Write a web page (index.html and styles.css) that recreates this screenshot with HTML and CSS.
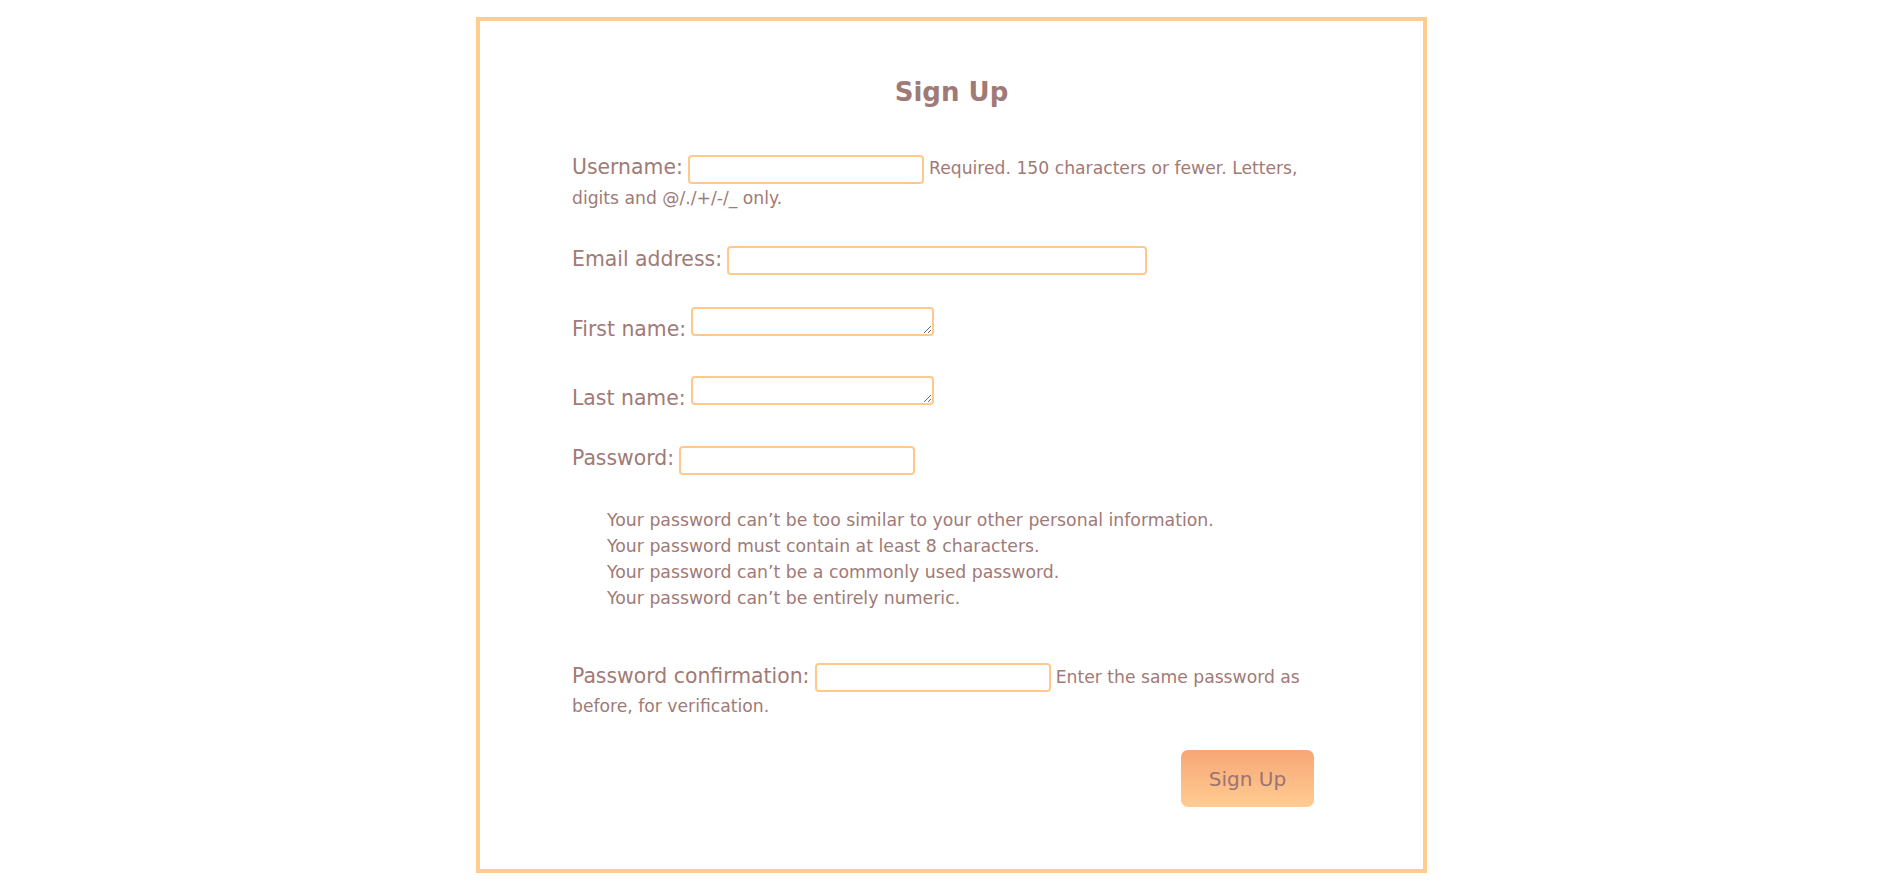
FILE: index.html
```html
<!DOCTYPE html>
<html lang="en">
<head>
<meta charset="utf-8">
<title>Sign Up</title>
<link rel="stylesheet" href="styles.css">
</head>
<body>
<div class="card">
  <h2 class="title">Sign Up</h2>
  <form class="form">
    <div class="field field-user">
      <label class="label" for="u">Username:</label>
      <input class="box box-short" id="u" type="text">
      <span class="help">Required. 150 characters or fewer. Letters, digits and @/./+/-/_ only.</span>
    </div>
    <div class="field field-email">
      <label class="label" for="e">Email address:</label>
      <input class="box box-email" id="e" type="email">
    </div>
    <div class="field field-first">
      <label class="label" for="f">First name:</label>
      <textarea class="box area" id="f" rows="1"></textarea>
    </div>
    <div class="field field-last">
      <label class="label" for="l">Last name:</label>
      <textarea class="box area" id="l" rows="1"></textarea>
    </div>
    <div class="field field-pass">
      <label class="label" for="p">Password:</label>
      <input class="box box-short" id="p" type="password">
    </div>
    <ul class="rules">
      <li>Your password can’t be too similar to your other personal information.</li>
      <li>Your password must contain at least 8 characters.</li>
      <li>Your password can’t be a commonly used password.</li>
      <li>Your password can’t be entirely numeric.</li>
    </ul>
    <div class="field field-confirm">
      <label class="label" for="c">Password confirmation:</label>
      <input class="box box-short" id="c" type="password">
      <span class="help">Enter the same password as before, for verification.</span>
    </div>
    <div class="actions">
      <button class="btn" type="button">Sign Up</button>
    </div>
  </form>
</div>
</body>
</html>
```

FILE: styles.css
```css
html, body {
  margin: 0;
  padding: 0;
  background: #ffffff;
}
body {
  font-family: "DejaVu Sans", "Liberation Sans", sans-serif;
  color: #a07a76;
}
.card {
  box-sizing: border-box;
  width: 951px;
  height: 856px;
  margin: 17px auto 0;
  border: 4px solid #ffcc90;
  padding: 55px 109px 0 92px;
}
.title {
  margin: 0;
  font-size: 26px;
  line-height: 32px;
  font-weight: bold;
  text-align: center;
  color: #a07a76;
  margin-left: -92px;
  margin-right: -109px;
}
.form {
  margin-top: 45px;
}
.field {
  line-height: 28px;
  margin-bottom: 32px;
}
.label {
  font-size: 20.4px;
}
.help {
  font-size: 17.2px;
}
.box {
  box-sizing: border-box;
  height: 29px;
  border: 2px solid #ffc98c;
  border-radius: 4px;
  background: #fff;
  font-family: "DejaVu Sans", sans-serif;
  font-size: 15px;
  padding: 0 4px;
  margin: 0;
  outline: none;
}
.box-short { width: 236px; }
.box-email { width: 420px; }
.area {
  width: 243px;
  resize: both;
  vertical-align: baseline;
  padding: 2px 4px;
}
.field-first { margin-bottom: 31px; }
.field-last { margin-bottom: 30px; }
.field-pass { margin-bottom: 32px; }
.rules {
  list-style: none;
  margin: 0 0 51px;
  padding-left: 35px;
  font-size: 17.3px;
  line-height: 26px;
}
.field-confirm { margin-bottom: 29px; }
.actions {
  display: flex;
  justify-content: flex-end;
}
.btn {
  width: 133px;
  height: 57px;
  border: none;
  border-radius: 7px;
  background: linear-gradient(to bottom, #f7a676, #ffcd92);
  color: #9b7373;
  font-family: "DejaVu Sans", sans-serif;
  font-size: 20px;
  cursor: pointer;
}
```
